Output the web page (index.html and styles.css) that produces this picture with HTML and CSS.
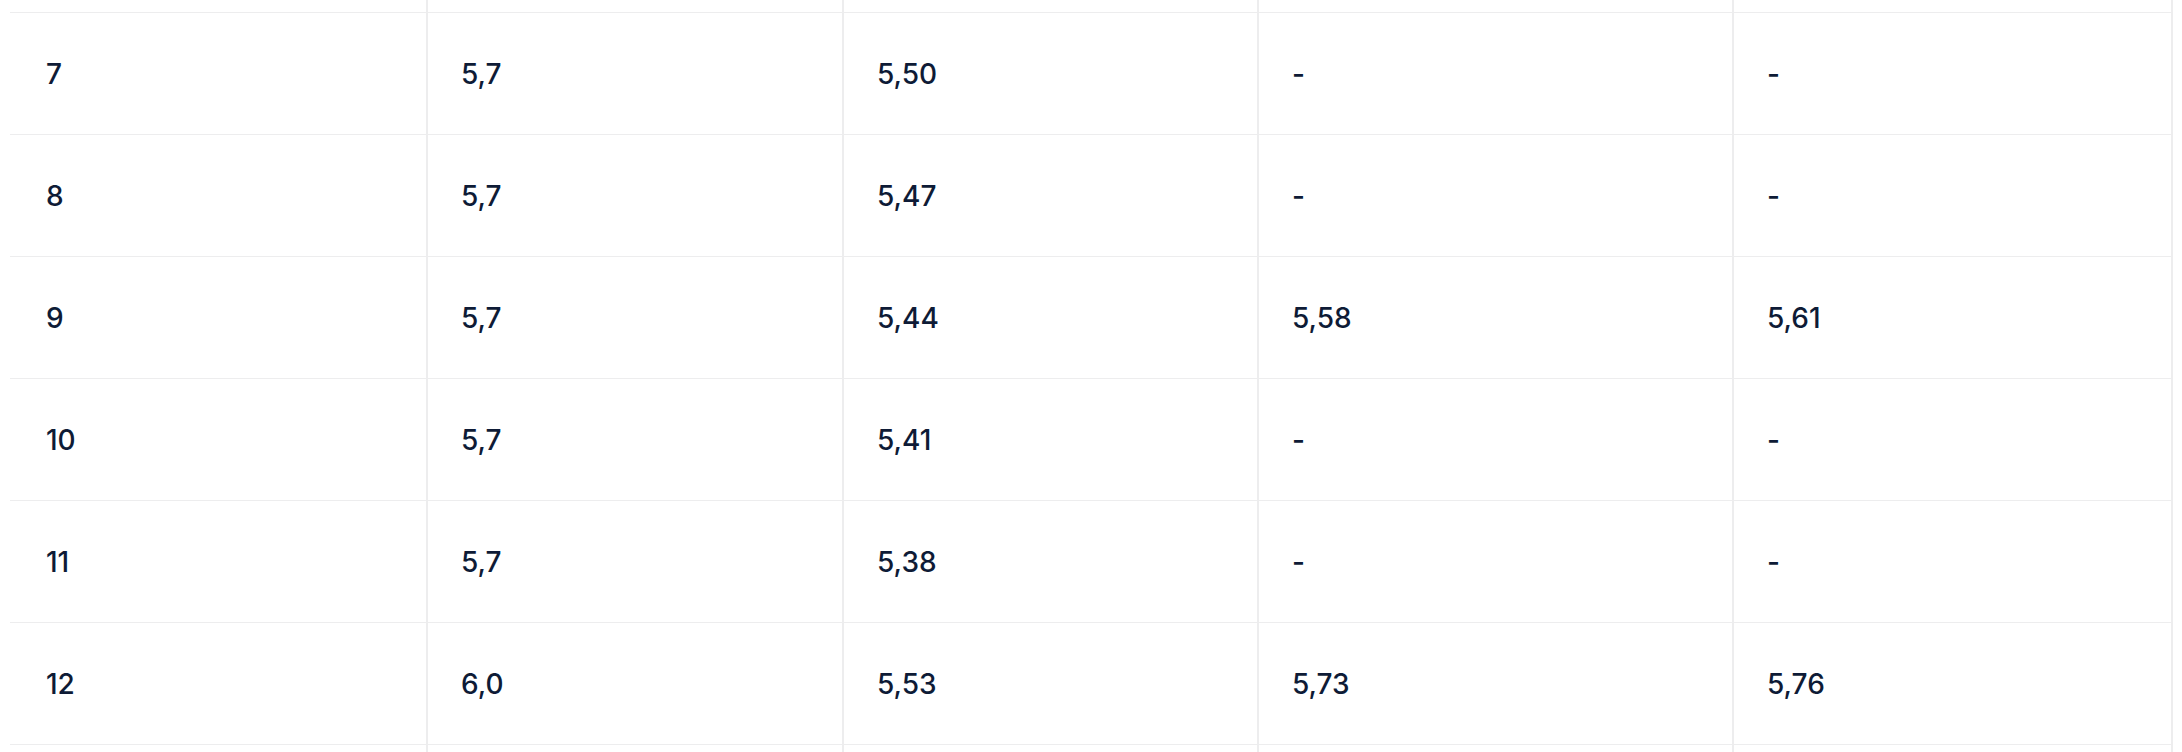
FILE: index.html
```html
<!DOCTYPE html>
<html lang="de">
<head>
<meta charset="utf-8">
<title>Tabelle</title>
<link rel="stylesheet" href="styles.css">
</head>
<body>
<table class="rates">
  <colgroup>
    <col class="c1"><col class="c2"><col class="c3"><col class="c4"><col class="c5">
  </colgroup>
  <tbody>
    <tr class="cut-top"><td></td><td></td><td></td><td></td><td></td></tr>
    <tr><td>7</td><td>5,7</td><td>5,50</td><td>-</td><td>-</td></tr>
    <tr><td>8</td><td>5,7</td><td>5,47</td><td>-</td><td>-</td></tr>
    <tr><td>9</td><td>5,7</td><td>5,44</td><td>5,58</td><td>5,61</td></tr>
    <tr><td>10</td><td>5,7</td><td>5,41</td><td>-</td><td>-</td></tr>
    <tr><td>11</td><td>5,7</td><td>5,38</td><td>-</td><td>-</td></tr>
    <tr><td>12</td><td>6,0</td><td>5,53</td><td>5,73</td><td>5,76</td></tr>
    <tr class="cut-bottom"><td></td><td></td><td></td><td></td><td></td></tr>
  </tbody>
</table>
</body>
</html>
```
FILE: styles.css
```css
html, body {
  background: #ffffff;
}
body {
  margin: 0 8px 0 10px;
  overflow: hidden;
}
.rates {
  border-collapse: separate;
  border-spacing: 0;
  table-layout: fixed;
  width: 2163px;
  font-family: Inter, "Noto Sans", sans-serif;
  font-size: 28px;
  font-weight: 500;
  color: #0e1b36;
}
.c1 { width: 417px; }
.c2 { width: 416px; }
.c3 { width: 415px; }
.c4 { width: 475px; }
.c5 { width: 440px; }
.rates td {
  box-sizing: border-box;
  height: 122px;
  padding: 0 0 0 33px;
  vertical-align: middle;
  line-height: 34px;
  border-bottom: 1px solid #ededee;
  border-left: 1px solid #ededee;
  border-right: 1px solid #ededee;
}
.rates td:first-child {
  border-left: none;
  padding-left: 36px;
}
.rates td:last-child {
  border-right: 2px solid #ededee;
}
.rates .cut-top td {
  height: 13px;
}
.rates .cut-bottom td {
  height: 10px;
  border-bottom: none;
}
```
